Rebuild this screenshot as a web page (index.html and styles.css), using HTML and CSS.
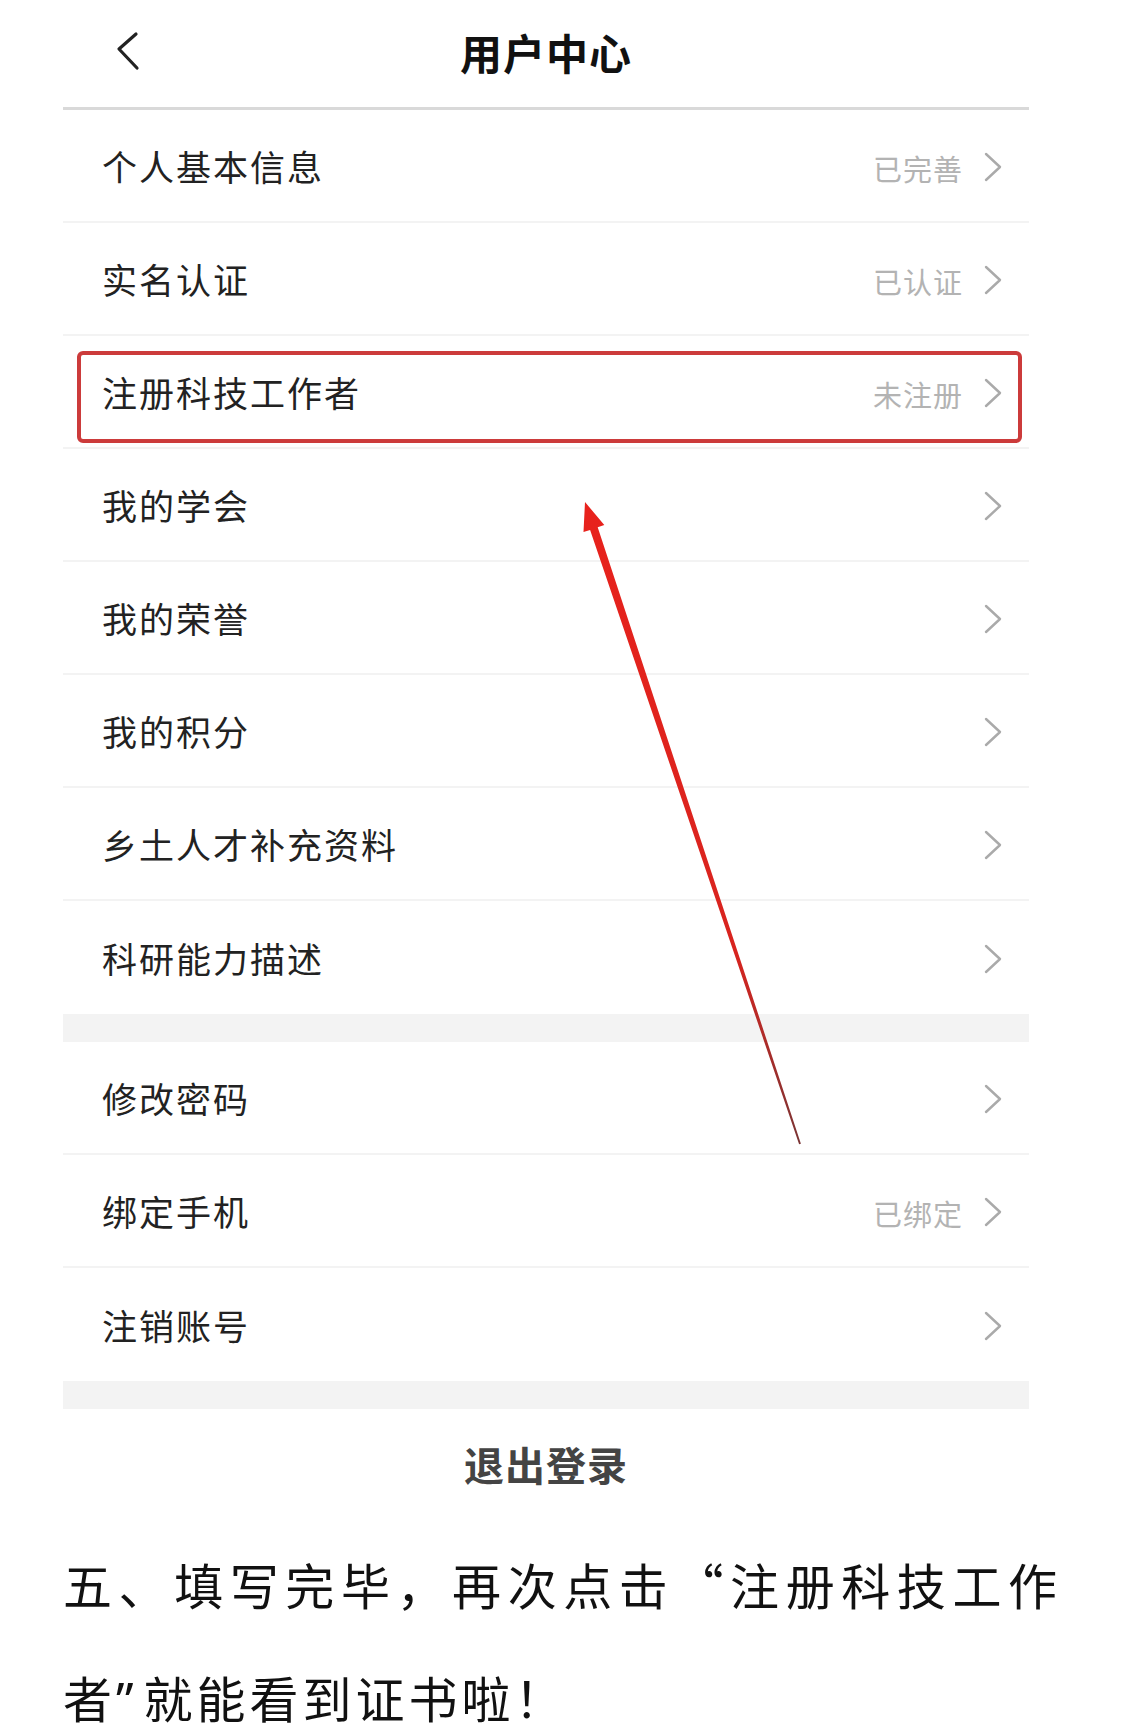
FILE: index.html
```html
<!DOCTYPE html>
<html>
<head>
    <meta charset="UTF-8">
    <meta name="viewport" content="width=device-width, initial-scale=1.0">
    <title>用户中心</title>
    <link rel="stylesheet" href="styles.css">
</head>
<body>
    <div class="page">
        <div class="app">
            <div class="nav">
                <svg class="back" width="24" height="40" viewBox="0 0 24 40">
                    <polyline points="20,3 3,18 21,37" fill="none" stroke="#222" stroke-width="3.2" stroke-linecap="round" stroke-linejoin="round"/>
                </svg>
                <h1>用户中心</h1>
                <span></span>
            </div>

            <ul class="menu">
                <li><span class="label">个人基本信息</span><span class="status">已完善</span><svg class="go" width="20" height="30" viewBox="0 0 20 30"><polyline points="3,2 17,15 3,28"/></svg></li>
                <li><span class="label">实名认证</span><span class="status">已认证</span><svg class="go" width="20" height="30" viewBox="0 0 20 30"><polyline points="3,2 17,15 3,28"/></svg></li>
                <li class="marked"><span class="label">注册科技工作者</span><span class="status">未注册</span><svg class="go" width="20" height="30" viewBox="0 0 20 30"><polyline points="3,2 17,15 3,28"/></svg><div class="mark"></div></li>
                <li><span class="label">我的学会</span><svg class="go" width="20" height="30" viewBox="0 0 20 30"><polyline points="3,2 17,15 3,28"/></svg></li>
                <li><span class="label">我的荣誉</span><svg class="go" width="20" height="30" viewBox="0 0 20 30"><polyline points="3,2 17,15 3,28"/></svg></li>
                <li><span class="label">我的积分</span><svg class="go" width="20" height="30" viewBox="0 0 20 30"><polyline points="3,2 17,15 3,28"/></svg></li>
                <li><span class="label">乡土人才补充资料</span><svg class="go" width="20" height="30" viewBox="0 0 20 30"><polyline points="3,2 17,15 3,28"/></svg></li>
                <li><span class="label">科研能力描述</span><svg class="go" width="20" height="30" viewBox="0 0 20 30"><polyline points="3,2 17,15 3,28"/></svg></li>
            </ul>
            <div class="gap"></div>
            <ul class="menu">
                <li><span class="label">修改密码</span><svg class="go" width="20" height="30" viewBox="0 0 20 30"><polyline points="3,2 17,15 3,28"/></svg></li>
                <li><span class="label">绑定手机</span><span class="status">已绑定</span><svg class="go" width="20" height="30" viewBox="0 0 20 30"><polyline points="3,2 17,15 3,28"/></svg></li>
                <li><span class="label">注销账号</span><svg class="go" width="20" height="30" viewBox="0 0 20 30"><polyline points="3,2 17,15 3,28"/></svg></li>
            </ul>
            <div class="gap"></div>
            <div class="logout">退出登录</div>
        </div>

        <p class="note">五、填写完毕，再次点击“注册科技工作者<span class="q">”</span>就能看到证书啦！</p>

        <!-- annotation arrow drawn over the screenshot -->
        <svg class="pointer" width="1125" height="1729" viewBox="0 0 1125 1729">
            <defs>
                <linearGradient id="shaft" x1="585" y1="502" x2="800" y2="1144" gradientUnits="userSpaceOnUse">
                    <stop offset="0" stop-color="#e8221c"/>
                    <stop offset="0.7" stop-color="#d8241f"/>
                    <stop offset="1" stop-color="#7a3434"/>
                </linearGradient>
            </defs>
            <polygon points="585,502 604.3,525.1 597.7,527.3 800.9,1143.7 799.1,1144.3 590.1,529.9 583.5,532.1" fill="url(#shaft)"/>
        </svg>
    </div>
</body>
</html>
```

FILE: styles.css
```css
body {
    margin: 0;
    padding: 0;
    background: #fff;
    font-family: "Noto Sans CJK SC", "Noto Sans", sans-serif;
    color: #222;
}
.page {
    position: relative;
    width: 1125px;
    height: 1729px;
    overflow: hidden;
}
.app {
    width: 966px;
    margin-left: 63px;
}
.nav {
    height: 107px;
    border-bottom: 3px solid #d9d9d9;
    display: grid;
    grid-template-columns: 1fr auto 1fr;
    align-items: center;
}
.nav .back {
    margin-left: 53px;
    margin-top: -6px;
}
.nav h1 {
    margin: 0 0 4px 0;
    font-size: 42px;
    font-weight: 700;
    color: #111;
    letter-spacing: 1px;
}
.menu {
    list-style: none;
    margin: 0;
    padding: 0;
}
.menu li {
    position: relative;
    box-sizing: border-box;
    height: 113px;
    padding: 0 26px 0 39px;
    border-bottom: 2px solid #f3f3f3;
    display: flex;
    align-items: center;
}
.menu li:last-child {
    border-bottom: none;
}
.label {
    flex: 1;
    font-size: 35px;
    letter-spacing: 2px;
    color: #222;
}
.status {
    font-size: 29px;
    letter-spacing: 1px;
    color: #b3b3b3;
    margin-right: 20px;
    margin-top: 4px;
}
.go {
    display: block;
    margin-top: 2px;
}
.go polyline {
    fill: none;
    stroke: #aaa;
    stroke-width: 2.4;
    stroke-linecap: round;
    stroke-linejoin: round;
}
.mark {
    position: absolute;
    top: 15px;
    left: 14px;
    right: 7px;
    bottom: 4px;
    border: 4px solid #cc3b3b;
    border-radius: 6px;
}
.gap {
    height: 28px;
    background: #f3f3f3;
}
.logout {
    height: 110px;
    display: flex;
    justify-content: center;
    align-items: center;
    font-size: 40px;
    font-weight: 700;
    color: #444;
    letter-spacing: 1px;
}
.note {
    margin: 8px 0 0 63px;
    width: 998px;
    font-size: 49px;
    line-height: 113px;
    letter-spacing: 4px;
    text-align: justify;
    color: #111;
}
.note .q {
    font-family: "Noto Sans", sans-serif;
    letter-spacing: 10px;
}
.pointer {
    position: absolute;
    top: 0;
    left: 0;
    pointer-events: none;
}
```
